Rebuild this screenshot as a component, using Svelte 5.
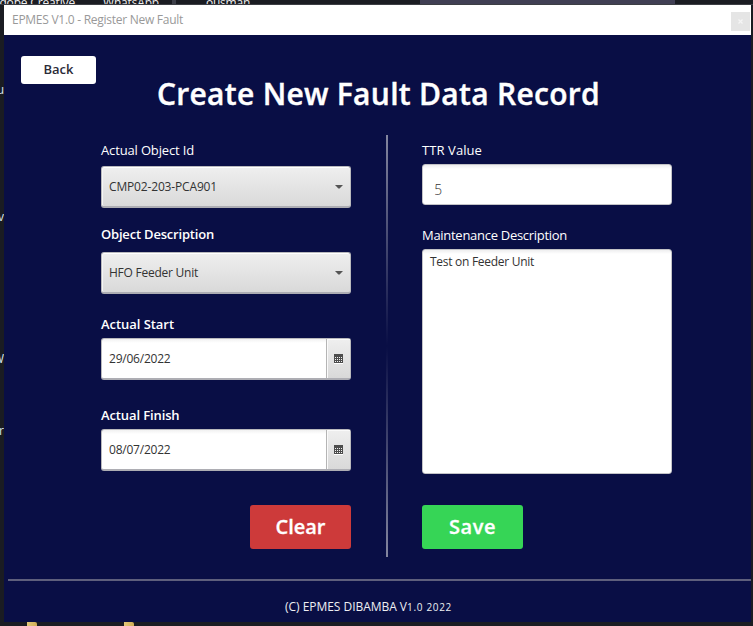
<script>
  const clippedLabels = [
    { text: 'Su', top: 82 },
    { text: 'Av', top: 209 },
    { text: 'W', top: 351 },
    { text: 'er', top: 423 }
  ];

  // Adjusts tracking so that a caption occupies the given width.
  function fit(node, width) {
    const natural = node.getBoundingClientRect().width;
    const spacing = (width - natural) / node.textContent.length;
    node.style.letterSpacing = `${spacing}px`;
  }
</script>

{#snippet combo(text, width)}
  <div class="combo">
    <span use:fit={width}>{text}</span>
    <svg width="8" height="4" viewBox="0 0 8 4"><path d="M0 0H8L4.6 3.6H3.4Z" fill="#555" /></svg>
  </div>
{/snippet}

{#snippet date(text)}
  <div class="date">
    <div class="value"><span use:fit={61.5}>{text}</span></div>
    <div class="picker">
      <svg width="9" height="10" viewBox="0 0 9 10" shape-rendering="crispEdges">
        <path d="M0 0H9V9H0Z" fill="#4d4d4d" />
        <path d="M0 9H9V10H0Z" fill="#fff" />
        {#each [3, 5, 7] as y}
          {#each [1, 3, 5, 7] as x}
            <rect {x} {y} width="1" height="1" fill="#f2f2f2" />
          {/each}
        {/each}
      </svg>
    </div>
  </div>
{/snippet}

<div class="desktop">
  <div class="strip">
    <div class="tab"></div>
    <div class="panel"></div>
    <span class="app" style:left="-8px"><span use:fit={83}>Adobe Creative</span></span>
    <span class="app" style:left="103px"><span use:fit={56}>WhatsApp</span></span>
    <span class="app" style:left="206px"><span use:fit={44}>ousman</span></span>
  </div>
  {#each clippedLabels as item}
    <span class="side" style:top={`${item.top}px`}>{item.text}</span>
  {/each}
  <i class="folder" style:left="27px"></i>
  <i class="folder" style:left="124px"></i>

  <main class="window">
    <header>
      <span use:fit={171}>EPMES V1.0 - Register New Fault</span>
      <div class="close">
        <svg width="5" height="5" viewBox="0 0 5 5"><path d="M.5 .5L4.5 4.5M4.5 .5L.5 4.5" stroke="#f5f5f5" stroke-width="1.2" /></svg>
      </div>
    </header>
    <section class="content">
      <div class="back"><span use:fit={30}>Back</span></div>
      <h1><span use:fit={443}>Create New Fault Data Record</span></h1>
      <div class="form">
        <div class="column">
          <div class="label first"><span use:fit={93}>Actual Object Id</span></div>
          {@render combo('CMP02-203-PCA901', 108)}
          <div class="label bold second"><span use:fit={113}>Object Description</span></div>
          {@render combo('HFO Feeder Unit', 89)}
          <div class="label bold third"><span use:fit={73}>Actual Start</span></div>
          {@render date('29/06/2022')}
          <div class="label bold fourth"><span use:fit={78.5}>Actual Finish</span></div>
          {@render date('08/07/2022')}
          <div class="button clear"><span use:fit={50}>Clear</span></div>
        </div>
        <div class="divider"></div>
        <div class="column">
          <div class="label ttr"><span use:fit={60}>TTR Value</span></div>
          <div class="input"><span>5</span></div>
          <div class="label maint"><span use:fit={145}>Maintenance Description</span></div>
          <div class="area"><span use:fit={104}>Test on Feeder Unit</span></div>
          <div class="button save"><span use:fit={47}>Save</span></div>
        </div>
      </div>
      <footer>
        <span use:fit={122}>(C) EPMES DIBAMBA V</span><span class="digits" use:fit={45}>1.0 2022</span>
      </footer>
    </section>
  </main>
</div>

<style>
  :global(body) { margin: 0; background: #1a1c22; }
  .desktop {
    position: relative;
    width: 753px;
    height: 626px;
    overflow: hidden;
    box-sizing: border-box;
    background: #1a1c22;
    font-family: "Open Sans", "Noto Sans", sans-serif;
    font-size: 12px;
    white-space: nowrap;
  }
  .strip {
    position: relative;
    display: flex;
    height: 5px;
    overflow: hidden;
    box-sizing: border-box;
    border-bottom: 1px solid #3c3e44;
  }
  .tab { width: 4px; margin-left: 172px; background: #3d3f49; }
  .panel { width: 255px; margin-left: 244px; background: #403f54; }
  .app { position: absolute; top: -3px; line-height: 12px; color: #eee; }
  .side { position: absolute; right: 749px; line-height: 16px; color: #d8e4ee; }
  .folder { position: absolute; top: 622px; width: 10px; height: 4px; background: linear-gradient(90deg, #e3c879, #cfac55); border-radius: 0 2px 0 0; }
  .window {
    position: relative;
    width: 747px;
    height: 617px;
    margin-left: 4px;
    background: #090e45;
  }
  header {
    display: flex;
    justify-content: space-between;
    height: 30px;
    box-sizing: border-box;
    padding: 0 1px 0 8px;
    background: #fff;
    color: #999;
    line-height: 30px;
  }
  .close { display: flex; align-items: center; justify-content: center; width: 19px; height: 19px; margin-top: 7px; background: #e5e5e5; }
  .content { display: flex; flex-direction: column; }
  .back {
    width: 75px;
    height: 28px;
    margin: 21px 0 0 17px;
    border-radius: 3px;
    background: #fff;
    color: #2b2b38;
    font-size: 13px;
    font-weight: 600;
    line-height: 27px;
    text-align: center;
  }
  h1 {
    height: 40px;
    margin: -10px 0 0 153px;
    color: #fff;
    font-size: 30px;
    font-weight: 600;
    line-height: 40px;
    -webkit-text-stroke: 0.4px #fff;
  }
  .form { display: flex; height: 422px; margin: 21px 0 0 97px; }
  .column { width: 250px; }
  .divider {
    width: 2px;
    margin: 0 34px 0 35px;
    background: linear-gradient(#84869f, #090e45 50%, #84869f);
  }
  .label { height: 20px; color: #fff; font-size: 13px; line-height: 20px; }
  .bold { font-weight: 600; }
  .first { padding: 5px 0 6px; }
  .second { padding: 16px 0 8px; }
  .third { padding: 20px 0 4px; }
  .fourth { padding: 25px 0 4px; }
  .ttr { padding: 5px 0 4px; }
  .maint { padding: 20px 0 4px; }
  .combo, .date {
    display: flex;
    align-items: center;
    box-sizing: border-box;
    height: 42px;
    border: 1px solid #b9b9bd;
    border-bottom: 2px solid #adadb3;
    border-radius: 3px;
    color: #333;
  }
  .combo {
    justify-content: space-between;
    padding: 0 7px;
    background: linear-gradient(#efefef, #d9d9d9);
    box-shadow: inset 0 1px #fff, inset 1px 0 #f5f5f5;
  }
  .date { background: linear-gradient(#f1f1f1, #fff 4px); }
  .value { flex: 1; padding-left: 7px; }
  .picker {
    display: flex;
    align-items: center;
    justify-content: center;
    align-self: stretch;
    width: 23px;
    border-left: 1px solid #b5b5b5;
    background: linear-gradient(#efefef, #d9d9d9);
    box-shadow: inset 1px 1px #fafafa;
  }
  .input, .area {
    box-sizing: border-box;
    border: 1px solid #c3c3c7;
    border-radius: 3px;
    background: linear-gradient(#eeeeef, #fff 4px);
    color: #333;
  }
  .input { height: 41px; padding: 12px 0 0 11px; font-size: 15px; font-weight: 300; line-height: 24px; }
  .input span { display: inline-block; transform: scaleX(.92); }
  .area { height: 225px; padding: 4px 7px; line-height: 16px; }
  .button {
    width: 101px;
    height: 44px;
    border-radius: 3px;
    color: #fff;
    font-size: 20px;
    font-weight: 600;
    line-height: 43px;
    text-align: center;
    -webkit-text-stroke: 0.3px #fff;
  }
  .clear { margin: 34px 0 0 149px; background: #cd3a3a; }
  .save { margin-top: 31px; background: #36d556; }
  footer {
    display: flex;
    align-items: baseline;
    height: 41px;
    margin: 22px 0 0 4px;
    box-sizing: border-box;
    padding: 16px 0 0 277px;
    border-top: 2px solid #5e5f7c;
    color: #eeeef3;
    line-height: 20px;
  }
  .digits { font-size: 10px; }
</style>
